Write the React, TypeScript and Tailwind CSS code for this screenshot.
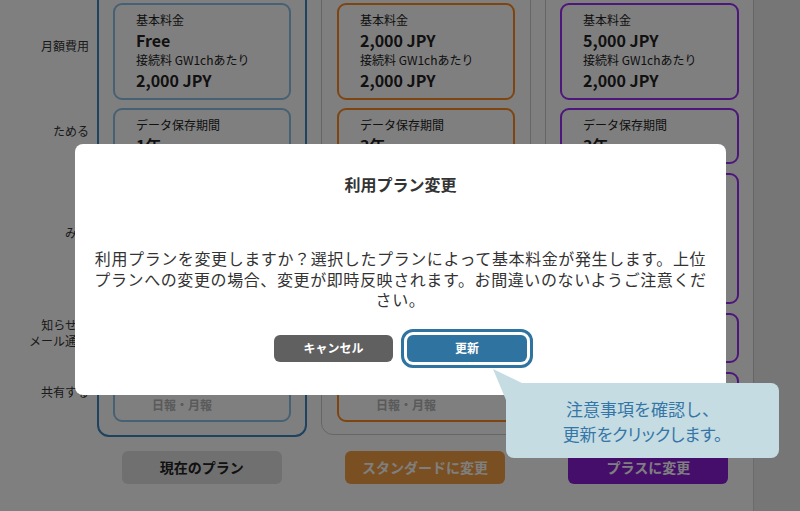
const labelCell = "flex items-center justify-end pb-[11px] pr-[8px] text-right text-[12px] leading-[16px] text-[#333]";

function Labels() {
  return (
    <div className="flex w-[97px] shrink-0 flex-col gap-[9px] pt-[16px]">
      <div className={`${labelCell} h-[97px]`}>月額費用</div>
      <div className={`${labelCell} -mt-[1px] h-[56px]`}>ためる</div>
      <div className={`${labelCell} h-[131px]`}>みる</div>
      <div className={`${labelCell} h-[50px]`}>
        <span>
          知らせる
          <br />
          メール通知
        </span>
      </div>
      <div className={`${labelCell} h-[50px]`}>共有する</div>
    </div>
  );
}

type Plan = {
  base: string;
  retention: string;
  cardBorder: string;
};

function PlanCards({ plan }: { plan: Plan }) {
  const card = `rounded-[9px] border-2 bg-white ${plan.cardBorder}`;
  return (
    <div className="flex flex-col gap-[9px]">
      {/* 月額費用 */}
      <div className={`${card} h-[97px] pl-[21px] pt-[6px] text-[#222]`}>
        <div className="text-[12px] leading-[18px]">基本料金</div>
        <div className="text-[16px] font-bold leading-[22px]">{plan.base}</div>
        <div className="text-[12px] leading-[18px]">接続料 GW1chあたり</div>
        <div className="text-[16px] font-bold leading-[22px]">2,000 JPY</div>
      </div>
      {/* ためる */}
      <div className={`${card} -mt-[1px] h-[56px] pl-[21px] pt-[6px] text-[#222]`}>
        <div className="text-[12px] leading-[18px]">データ保存期間</div>
        <div className="text-[16px] font-bold leading-[22px]">{plan.retention}</div>
      </div>
      {/* みる */}
      <div className={`${card} h-[131px] pl-[21px] pt-[6px] text-[#222]`}>
        <div className="text-[12px] leading-[18px]">ダッシュボード</div>
        <div className="text-[16px] font-bold leading-[22px]">利用可能</div>
      </div>
      {/* 知らせる */}
      <div className={`${card} h-[50px] pl-[21px] pt-[4px] text-[#222]`}>
        <div className="text-[12px] leading-[18px]">アラート通知</div>
        <div className="text-[14px] font-bold leading-[20px]">あり</div>
      </div>
      {/* 共有する */}
      <div className={`${card} h-[50px] pl-[37px] pt-[4px]`}>
        <div className="text-[12px] leading-[18px] text-[#222]">レポート</div>
        <div className="text-[12px] font-bold leading-[18px] text-[#b4b4b4]">日報・月報</div>
      </div>
    </div>
  );
}

export default function App() {
  return (
    <div className="relative h-[511px] w-[800px] overflow-hidden bg-[#ececec] font-['Noto_Sans_CJK_JP','Noto_Sans',sans-serif]">
      <div className="flex h-full w-[754px] flex-col border-r border-[#d8d8d8] bg-white">
        <div className="-mt-[13px] flex items-start">
          <Labels />
          <div className="w-[210px] shrink-0 rounded-[12px] border-2 border-[#3a86bf] px-[14px] pb-[13px] pt-[14px]">
            <PlanCards plan={{ base: "Free", retention: "1年", cardBorder: "border-[#8cc2e6]" }} />
          </div>
          <div className="ml-[14px] w-[210px] shrink-0 rounded-[12px] border border-[#cccccc] px-[15px] pb-[12px] pt-[15px]">
            <PlanCards plan={{ base: "2,000 JPY", retention: "3年", cardBorder: "border-[#ff8a22]" }} />
          </div>
          <div className="ml-[14px] w-[209px] shrink-0 rounded-[12px] border border-[#cccccc] px-[14px] pb-[12px] pt-[15px]">
            <PlanCards plan={{ base: "5,000 JPY", retention: "3年", cardBorder: "border-[#9a2cf4]" }} />
          </div>
        </div>

        <div className="mt-[14px] flex gap-[14px] pl-[97px]">
          <div className="flex w-[210px] justify-center">
            <button className="h-[33px] w-[160px] rounded-[6px] bg-[#e0e0e0] text-[14px] font-bold text-[#222]">
              現在のプラン
            </button>
          </div>
          <div className="flex w-[210px] justify-center">
            <button className="h-[33px] w-[160px] rounded-[6px] bg-[#f49e44] text-[14px] font-bold text-white">
              スタンダードに変更
            </button>
          </div>
          <div className="flex w-[210px] justify-center">
            <button className="h-[33px] w-[160px] rounded-[6px] bg-[#8a1cd6] text-[14px] font-bold text-white">
              プラスに変更
            </button>
          </div>
        </div>
      </div>

      {/* overlay */}
      <div className="absolute inset-0 bg-black/50" />

      {/* modal */}
      <div className="absolute left-[75px] top-[144px] h-[251px] w-[651px] rounded-[8px] bg-white px-[15px] pt-[28px] text-[#333]">
        <div className="text-center text-[16px] font-bold leading-[24px]">利用プラン変更</div>
        <p className="mt-[52px] text-center text-[16px] leading-[20.5px] tracking-[0.6px]">
          利用プランを変更しますか？選択したプランによって基本料金が発生します。上位プランへの変更の場合、変更が即時反映されます。お間違いのないようご注意ください。
        </p>
        <div className="mt-[25px] flex justify-center gap-[14px]">
          <button className="h-[27px] w-[119px] rounded-[6px] bg-[#606060] text-[12px] font-bold text-white">
            キャンセル
          </button>
          <button className="h-[27px] w-[120px] rounded-[6px] bg-[#2f73a0] text-[12px] font-bold text-white outline-3 outline-offset-3 outline-[#2f73a0]">
            更新
          </button>
        </div>
      </div>

      {/* callout */}
      <svg className="absolute left-[490px] top-[366px]" width="40" height="40" viewBox="0 0 40 40">
        <polygon points="3,3 34,18 16,34" fill="#c5dce2" />
      </svg>
      <div className="absolute left-[506px] top-[383px] flex h-[75px] w-[273px] flex-col items-center justify-center rounded-[8px] bg-[#c5dce2] text-center text-[17px] leading-[25px] text-[#3576a8]">
        <span>注意事項を確認し、</span>
        <span className="[font-feature-settings:'palt']">更新をクリックします。</span>
      </div>
    </div>
  );
}
